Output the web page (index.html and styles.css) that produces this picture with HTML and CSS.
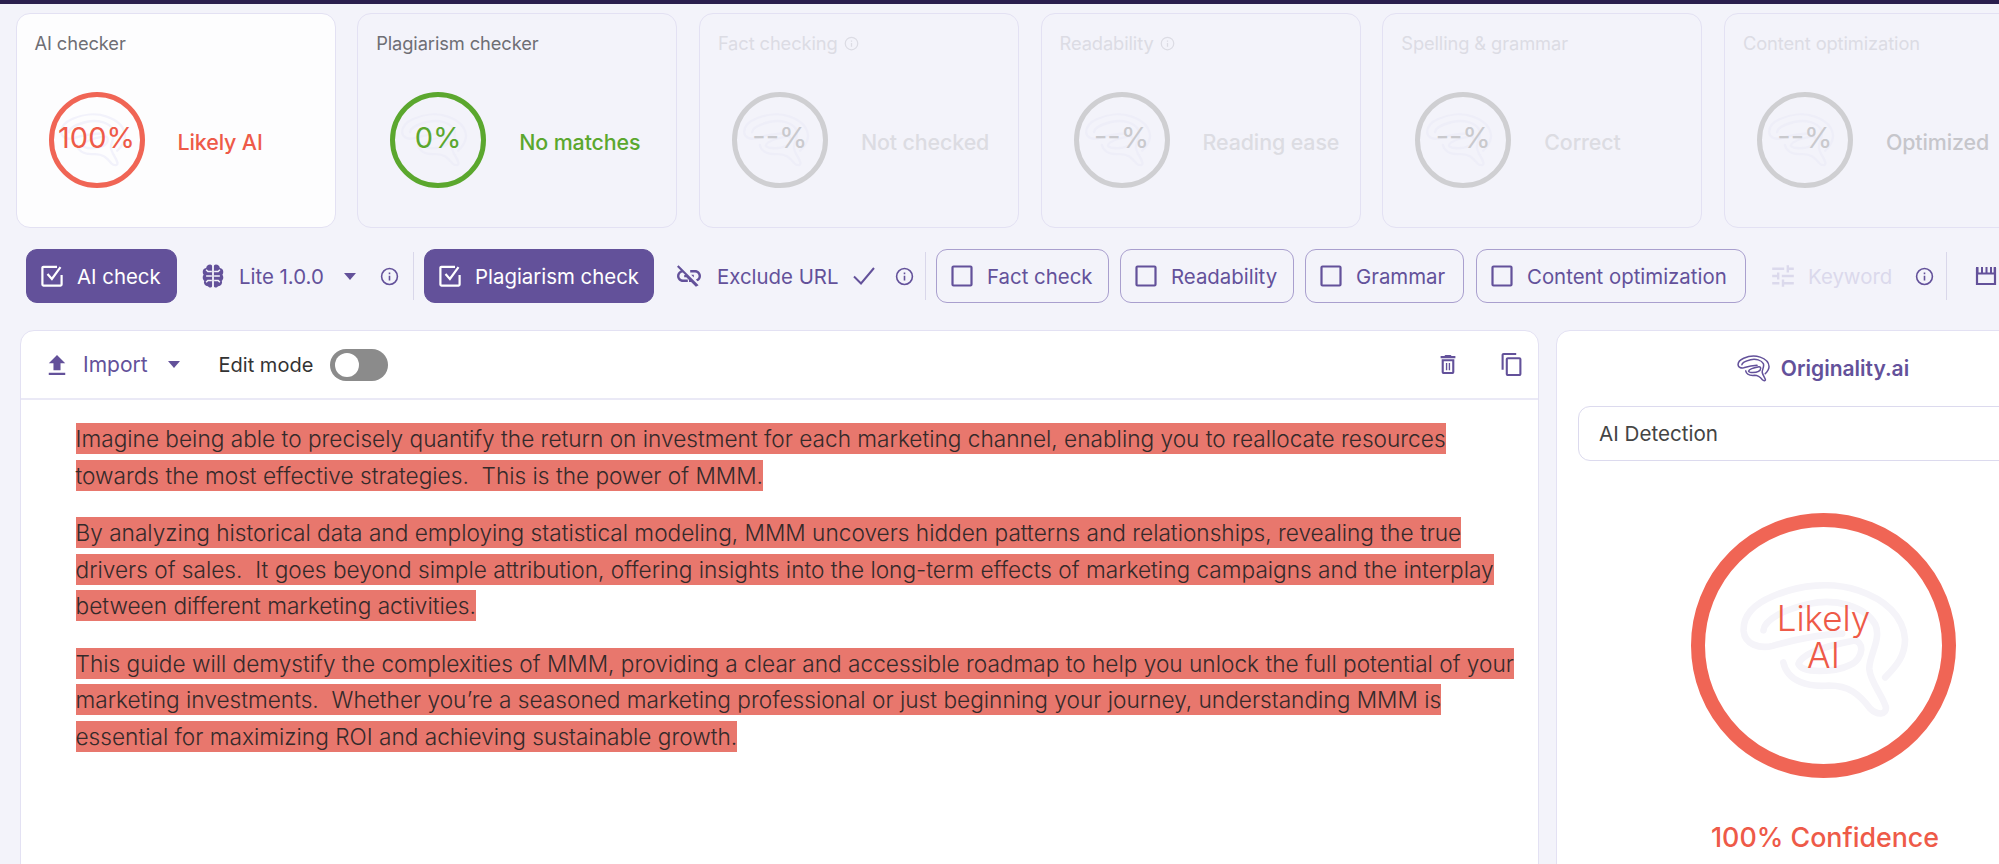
FILE: index.html
```html
<!DOCTYPE html>
<html lang="en">
<head>
<meta charset="utf-8">
<title>Originality.ai</title>
<link rel="stylesheet" href="styles.css">
</head>
<body>
<svg class="defs" aria-hidden="true">
  <symbol id="brain" viewBox="85 145 520 425">
    <path fill="none" stroke="currentColor" stroke-linecap="round" stroke-linejoin="round" d="M530 440C565 405 590 375 590 325C585 255 530 205 450 178C370 150 270 160 190 195C130 220 100 255 102 300C105 340 150 355 190 345C260 325 330 310 400 308M162 298C165 265 225 235 300 218C380 200 470 225 500 280C520 325 480 375 482 415C485 455 520 490 532 530C535 555 505 555 485 535C450 490 420 465 360 465C300 470 235 455 222 395M268 400C275 370 350 345 430 330C470 325 465 385 425 402C380 425 280 430 268 400"/>
  </symbol>
  <symbol id="info" viewBox="0 0 24 24">
    <circle cx="12" cy="12" r="10" fill="none" stroke="currentColor" stroke-width="2"/>
    <path fill="currentColor" d="M11 11h2v6h-2zM11 7h2v2h-2z"/>
  </symbol>
  <symbol id="checked" viewBox="0 0 24 24">
    <path fill="none" stroke="currentColor" stroke-width="2.2" d="M17 2.8H3.4a1 1 0 0 0-1 1v16.8a1 1 0 0 0 1 1h17.2a1 1 0 0 0 1-1V11"/>
    <path fill="none" stroke="currentColor" stroke-width="2.2" d="M7.5 10l4.4 5L20.5 3.2"/>
  </symbol>
  <symbol id="unchecked" viewBox="0 0 24 24">
    <rect x="2.500" y="2.500" width="19" height="19" rx="1" fill="none" stroke="currentColor" stroke-width="2.2"/>
  </symbol>
  <symbol id="caret" viewBox="0 0 12 7">
    <path fill="currentColor" d="M0 0h12L6 7z"/>
  </symbol>
</svg>

<div class="topbar"></div>

<section class="cards">
  <article class="card card-active">
    <h2 class="card-title">AI checker</h2>
    <div class="card-body">
      <div class="ring ring-red"><svg class="ring-brain"><use href="#brain"/></svg><span class="ring-value">100%</span></div>
      <span class="card-status status-red">Likely AI</span>
    </div>
  </article>
  <article class="card">
    <h2 class="card-title">Plagiarism checker</h2>
    <div class="card-body">
      <div class="ring ring-green"><svg class="ring-brain"><use href="#brain"/></svg><span class="ring-value">0%</span></div>
      <span class="card-status status-green">No matches</span>
    </div>
  </article>
  <article class="card card-off">
    <h2 class="card-title">Fact checking <svg class="title-info"><use href="#info"/></svg></h2>
    <div class="card-body">
      <div class="ring ring-grey"><svg class="ring-brain"><use href="#brain"/></svg><span class="ring-value">--%</span></div>
      <span class="card-status">Not checked</span>
    </div>
  </article>
  <article class="card card-off">
    <h2 class="card-title">Readability <svg class="title-info"><use href="#info"/></svg></h2>
    <div class="card-body">
      <div class="ring ring-grey"><svg class="ring-brain"><use href="#brain"/></svg><span class="ring-value">--%</span></div>
      <span class="card-status">Reading ease</span>
    </div>
  </article>
  <article class="card card-off">
    <h2 class="card-title">Spelling &amp; grammar</h2>
    <div class="card-body">
      <div class="ring ring-grey"><svg class="ring-brain"><use href="#brain"/></svg><span class="ring-value">--%</span></div>
      <span class="card-status">Correct</span>
    </div>
  </article>
  <article class="card card-off">
    <h2 class="card-title">Content optimization</h2>
    <div class="card-body">
      <div class="ring ring-grey"><svg class="ring-brain"><use href="#brain"/></svg><span class="ring-value">--%</span></div>
      <span class="card-status status-dim">Optimized</span>
    </div>
  </article>
</section>

<nav class="toolbar">
  <button class="btn btn-on btn-ai"><svg class="icon"><use href="#checked"/></svg>AI check</button>
  <div class="tool tool-model">
    <svg class="icon" viewBox="2.500 1.500 19 21"><path fill="currentColor" d="M9.5 2A3.6 3.6 0 0 0 6 5a3.6 3.6 0 0 0-3 3.5c0 .9.3 1.700.8 2.300A4 4 0 0 0 3 13.300c0 1.200.5 2.200 1.300 2.900A3.500 3.500 0 0 0 7.500 21c.9 1 1.900 1.200 2.600 1 .7-.2 1.100-.7 1.100-1.300V3.600C11.200 2.700 10.500 2 9.500 2zM14.500 2A3.600 3.600 0 0 1 18 5a3.600 3.600 0 0 1 3 3.500c0 .9-.3 1.700-.8 2.300.5.700.8 1.600.8 2.500 0 1.200-.5 2.200-1.300 2.900A3.500 3.500 0 0 1 16.500 21c-.9 1-1.900 1.200-2.600 1-.7-.2-1.100-.7-1.100-1.300V3.600C12.800 2.700 13.500 2 14.500 2z"/><path fill="none" stroke="#f3f3fa" stroke-width="1.300" d="M11 8H7.500L6 6.500M11 12H6M11 16H7.500L6 17.500M13 8h3.500L18 6.500M13 12h5M13 16h3.500l1.500 1.500"/></svg>
    <span>Lite 1.0.0</span>
    <svg class="caret"><use href="#caret"/></svg>
    <svg class="info"><use href="#info"/></svg>
  </div>
  <i class="sep"></i>
  <button class="btn btn-on btn-plag"><svg class="icon"><use href="#checked"/></svg>Plagiarism check</button>
  <div class="tool tool-url">
    <svg class="icon" viewBox="2 2.500 20 19"><path fill="currentColor" d="M17 7h-4v2h4c1.650 0 3 1.350 3 3 0 1.430-1 2.630-2.340 2.930l1.460 1.460C20.880 15.790 22 14.010 22 12c0-2.760-2.240-5-5-5zm-1 4h-2.190l2 2H16zM2 4.270l3.110 3.110C3.290 8.120 2 9.910 2 12c0 2.760 2.240 5 5 5h4v-2H7c-1.650 0-3-1.350-3-3 0-1.590 1.240-2.890 2.810-2.980l2.070 2.070H8v2h1.730l2.270 2.270V17h1.730l4.010 4L20 19.740 3.270 3 2 4.270z"/></svg>
    <span>Exclude URL</span>
    <svg class="tick" viewBox="0 0 24 24"><path fill="none" stroke="currentColor" stroke-width="2" d="M2 12.500l7 7L22 4"/></svg>
    <svg class="info"><use href="#info"/></svg>
  </div>
  <i class="sep"></i>
  <button class="btn btn-fact"><svg class="icon"><use href="#unchecked"/></svg>Fact check</button>
  <button class="btn btn-read"><svg class="icon"><use href="#unchecked"/></svg>Readability</button>
  <button class="btn btn-gram"><svg class="icon"><use href="#unchecked"/></svg>Grammar</button>
  <button class="btn btn-cont"><svg class="icon"><use href="#unchecked"/></svg>Content optimization</button>
  <div class="tool tool-key">
    <svg class="icon key-dim" viewBox="2 2 20 20"><path fill="currentColor" d="M3 17v2h6v-2H3zM3 5v2h10V5H3zm10 16v-2h8v-2h-8v-2h-2v6h2zM7 9v2H3v2h4v2h2V9H7zm14 4v-2H11v2h10zm-6-4h2V7h4V5h-4V3h-2v6z"/></svg>
    <span class="key-dim">Keyword</span>
    <svg class="info"><use href="#info"/></svg>
  </div>
  <i class="sep"></i>
  <svg class="icon clapper" viewBox="0 0 24 24"><path fill="none" stroke="currentColor" stroke-width="2.200" d="M3 4v16h18V4M3 9.500h18"/><path fill="currentColor" d="M2 3h2.500v6H2zM7 3h2v6H7zM11.500 3h2v6h-2zM16 3h2v6h-2zM19.700 3h2.300v6h-2.300z"/></svg>
</nav>

<main class="workspace">
  <section class="editor">
    <header class="editor-head">
      <div class="import">
        <svg class="upload" viewBox="5 3 14 17"><path fill="currentColor" d="M9 16h6v-6h4l-7-7-7 7h4zm-4 2h14v2H5z"/></svg>
        <span>Import</span>
        <svg class="caret"><use href="#caret"/></svg>
      </div>
      <span class="edit-label">Edit mode</span>
      <div class="toggle"><i class="toggle-thumb"></i></div>
      <div class="head-actions">
        <svg class="trash" viewBox="5 3 14 18"><path fill="currentColor" d="M6 19c0 1.100.9 2 2 2h8c1.100 0 2-.9 2-2V7H6v12zM8 9h8v10H8V9zm7.500-5l-1-1h-5l-1 1H5v2h14V4zM10 10.500h1.300v7H10zM12.700 10.500H14v7h-1.300z"/></svg>
        <svg class="copy" viewBox="2 1 19 22"><path fill="currentColor" d="M16 1H4c-1.100 0-2 .9-2 2v14h2V3h12V1zm3 4H8c-1.100 0-2 .9-2 2v14c0 1.100.9 2 2 2h11c1.100 0 2-.9 2-2V7c0-1.100-.9-2-2-2zm0 16H8V7h11v14z"/></svg>
      </div>
    </header>
    <div class="editor-text">
      <p><mark>Imagine being able to precisely quantify the return on investment for each marketing channel, enabling you to reallocate resources<br>towards the most effective strategies.&nbsp; This is the power of MMM.</mark></p>
      <p><mark>By analyzing historical data and employing statistical modeling, MMM uncovers hidden patterns and relationships, revealing the true<br>drivers of sales.&nbsp; It goes beyond simple attribution, offering insights into the long-term effects of marketing campaigns and the interplay<br>between different marketing activities.</mark></p>
      <p><mark>This guide will demystify the complexities of MMM, providing a clear and accessible roadmap to help you unlock the full potential of your<br>marketing investments.&nbsp; Whether you’re a seasoned marketing professional or just beginning your journey, understanding MMM is<br>essential for maximizing ROI and achieving sustainable growth.</mark></p>
    </div>
  </section>
  <aside class="results">
    <div class="logo">
      <svg class="logo-mark"><use href="#brain"/></svg>
      <span>Originality.ai</span>
    </div>
    <div class="select">AI Detection</div>
    <div class="big-ring">
      <svg class="big-brain"><use href="#brain"/></svg>
      <span class="big-label">Likely<br>AI</span>
    </div>
    <div class="confidence">100% Confidence</div>
  </aside>
</main>
</body>
</html>
```

FILE: styles.css
```css
* { box-sizing: border-box; }
html, body { margin: 0; padding: 0; height: 864px; overflow: hidden; }
body { background: #f3f3fa; font-family: Inter, "Liberation Sans", sans-serif; color: #63519a; }
.defs { position: absolute; width: 0; height: 0; }
.topbar { height: 4px; background: #2a1f4e; }

.cards { display: flex; gap: 21.7px; padding: 9px 0 0 15.5px; }
.card { flex: 0 0 320px; height: 215px; border: 1px solid #e3e1f3; border-radius: 14px; padding: 19px 18px 0; background: #f3f3fa; }
.card-active { background: #fdfdfe; }
.card-title { margin: 0; height: 20px; display: flex; align-items: center; gap: 6px; font-size: 18.3px; font-weight: 400; line-height: 20px; color: #6e6e74; letter-spacing: -.1px; }
.card-off .card-title { color: #dcdce4; }
.title-info { width: 15px; height: 15px; color: #dcdce4; }
.card-body { display: flex; align-items: center; gap: 33px; margin: 39px 0 0 14px; }
.ring { position: relative; flex: 0 0 96px; height: 96px; border-radius: 50%; border: 5px solid; display: flex; align-items: center; justify-content: center; }
.ring-red { border-color: #f06555; color: #ee5a48; }
.ring-green { border-color: #5ba72e; color: #5ba72e; }
.ring-grey { border-color: #cfcfd2; color: #c9c9cd; }
.ring-brain { position: absolute; left: 5px; top: 15px; width: 68px; height: 56px; color: #f2f2fb; stroke-width: 18px; }
.card .ring-green .ring-brain, .card-off .ring-brain { color: #eeeef8; }
.ring-value { position: relative; font-size: 29px; line-height: 1; margin-top: -6px; }
.card-status { font-size: 21.4px; font-weight: 500; color: #dcdce2; margin-top: 3px; letter-spacing: -.1px; }
.status-red { color: #ee5a48; }
.status-green { color: #5ba72e; }
.status-dim { color: #c6c6cb; }

.toolbar { display: flex; align-items: center; height: 54px; margin-top: 21px; padding-left: 26px; font-size: 20.4px; white-space: nowrap; }
.btn { flex: none; display: flex; align-items: center; gap: 13px; height: 54px; padding: 0 13px; border: 1.5px solid #a99fce; border-radius: 11px; background: transparent; color: #63519a; font: inherit; }
.btn-on { background: #63519a; border-color: #63519a; color: #fff; }
.btn-ai { width: 151px; }
.btn-plag { width: 230px; margin-left: 10px; }
.btn-fact { width: 173px; margin-left: 10px; }
.btn-read { width: 174px; margin-left: 11px; }
.btn-gram { width: 159px; margin-left: 11px; }
.btn-cont { width: 270px; margin-left: 12px; }
.icon { flex: none; width: 24px; height: 24px; }
.tool { flex: none; display: flex; align-items: center; }
.tool-model { margin-left: 24px; width: 212px; }
.tool-model span { margin-left: 14px; }
.tool-model .caret { margin-left: 20px; }
.tool-model .info { margin-left: 24px; }
.tool-url { margin-left: 23px; width: 248px; }
.tool-url span { margin-left: 16px; }
.tool-key { margin-left: 25px; width: 175px; }
.tool-key span { margin-left: 13px; }
.tool-key .info { margin-left: 23px; }
.key-dim { color: #dbd9ec; }
.caret { flex: none; width: 12px; height: 7px; }
.info { flex: none; width: 19px; height: 19px; }
.tick { flex: none; width: 24px; height: 24px; margin-left: 13px; }
.tool-url .info { margin-left: 19px; }
.sep { flex: none; width: 1px; height: 48px; background: #d9d7ea; }
.clapper { margin-left: 27px; }

.workspace { display: flex; gap: 17px; height: 560px; margin-top: 27px; padding-left: 20px; }
.editor, .results { background: #fff; border: 1px solid #e3e1f3; border-radius: 14px 14px 0 0; }
.editor { flex: 0 0 1519px; }
.results { flex: 0 0 480px; padding: 0 21px; }

.editor-head { display: flex; align-items: center; height: 69px; padding-left: 27px; border-bottom: 2px solid #eae9f6; }
.import { display: flex; align-items: center; font-size: 21px; }
.upload { width: 18px; height: 20px; }
.import span { margin-left: 17px; }
.import .caret { margin-left: 20px; }
.edit-label { margin-left: 39px; font-size: 20px; color: #333; }
.toggle { position: relative; width: 58px; height: 32px; margin-left: 17px; border-radius: 16px; background: #8b8b8b; }
.toggle-thumb { position: absolute; left: 5px; top: 4px; width: 24px; height: 24px; border-radius: 50%; background: #fff; }
.head-actions { display: flex; align-items: center; gap: 45px; margin-left: auto; padding-right: 16px; }
.trash { width: 16px; height: 19px; }
.copy { width: 21px; height: 23px; }

.editor-text { padding: 21px 0 0 54.5px; font-size: 22.65px; font-weight: 300; line-height: 36.5px; color: #352a2a; white-space: nowrap; }
.editor-text p { margin: 0 0 21px; }
.editor-text mark { background: #e8776d; color: inherit; padding: 2px 0; }

.logo { display: flex; align-items: center; justify-content: center; gap: 11px; height: 75px; padding-right: 10px; font-size: 21px; font-weight: 600; }
.logo-mark { width: 33px; height: 27px; stroke-width: 24px; }
.select { width: 500px; height: 55px; line-height: 53px; padding-left: 20px; border: 1.5px solid #dcdaee; border-radius: 12px; font-size: 20.6px; color: #444; }
.big-ring { position: relative; width: 265px; height: 265px; margin: 52px 0 0 113px; border: 14px solid #f06555; border-radius: 50%; display: flex; align-items: center; justify-content: center; }
.big-brain { position: absolute; left: 33px; top: 52px; width: 172px; height: 142px; color: #f5f4f9; stroke-width: 20px; }
.big-label { position: relative; font-size: 35px; font-weight: 300; line-height: 37px; text-align: center; color: #ee5a48; margin-top: -18px; }
.confidence { margin: 43px 0 0 133px; font-size: 26.8px; font-weight: 500; color: #ee5a48; white-space: nowrap; }
```
